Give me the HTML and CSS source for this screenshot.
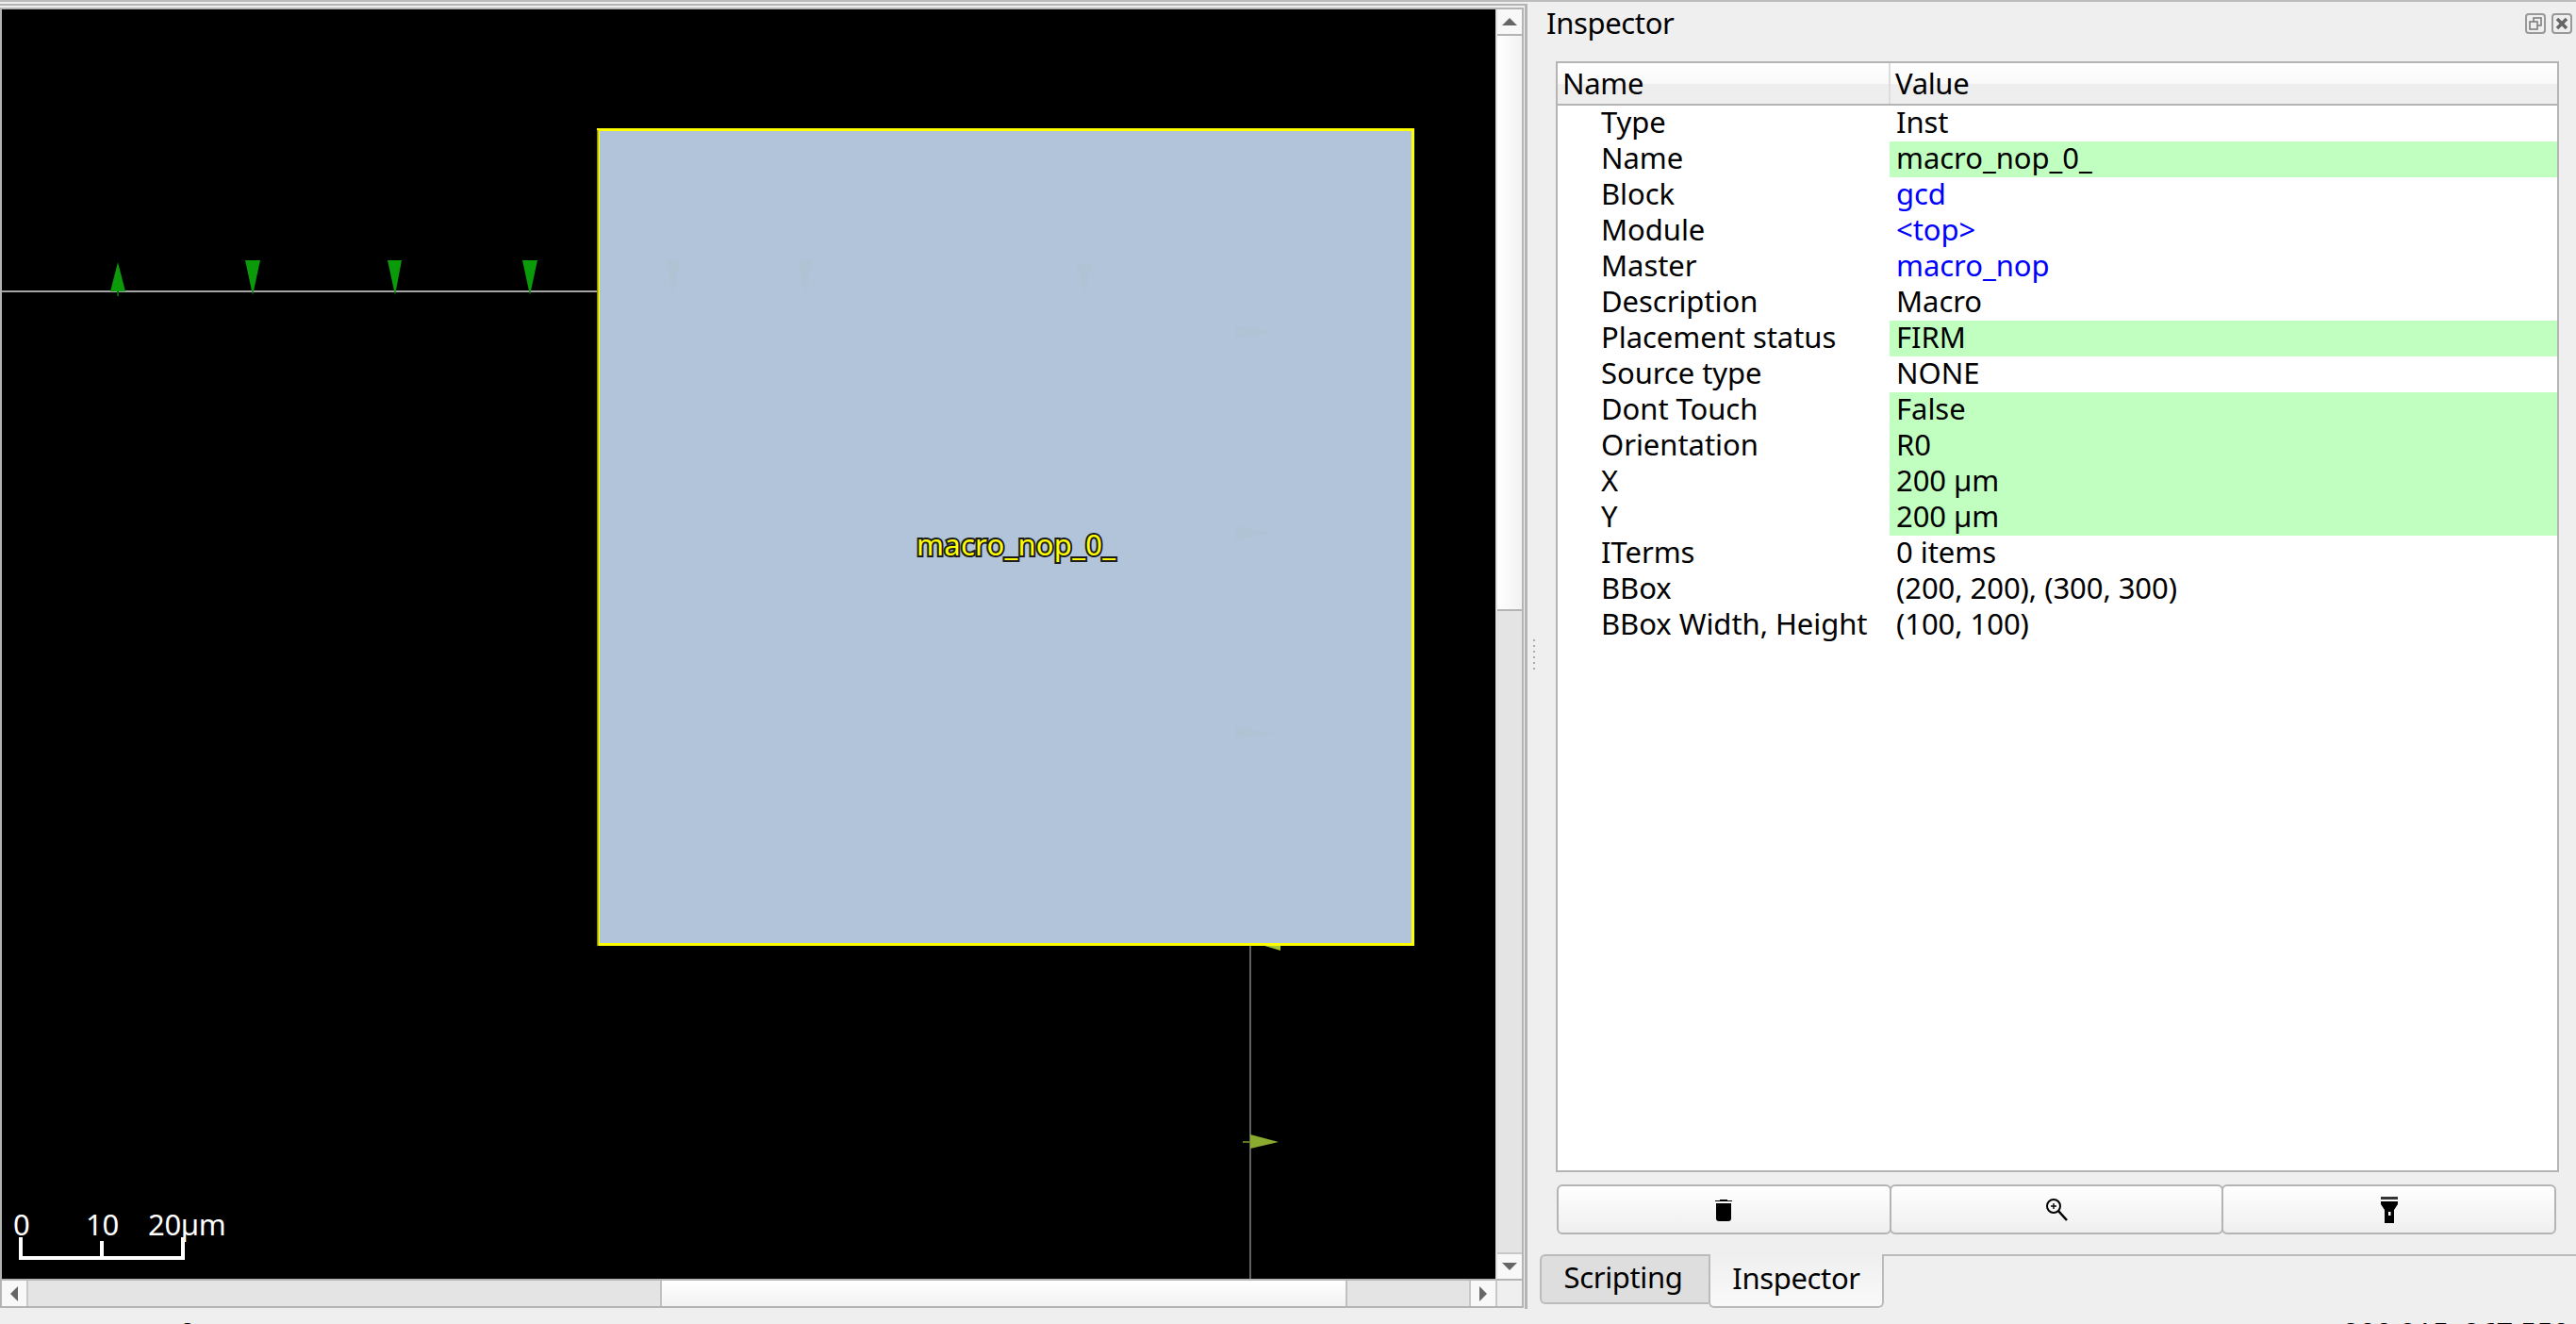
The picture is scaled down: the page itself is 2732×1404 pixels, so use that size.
FILE: index.html
```html
<!DOCTYPE html>
<html>
<head>
  <meta http-equiv="Content-Type" content="text/html; charset=utf-8" />
  <title>Inspector</title>
<link rel="stylesheet" href="styles.css">
</head>
<body>

<div class="topline"></div>

<div class="main">

  <div class="view-frame">
    <div class="view">
      <svg class="canvas" width="1584" height="1346" viewBox="2 10 1584 1346">
        <!-- nets -->
        <rect x="2" y="308" width="632" height="2" fill="#a5a5a5"/>
        <rect x="1325" y="1003" width="2" height="353" fill="#606060"/>
        <!-- pins -->
        <polygon points="125,278 133,309 117,309" fill="#0a9a0a"/>
        <rect x="124" y="309" width="2" height="5" fill="#075f07"/>
        <polygon points="260,276 276,276 268,313" fill="#0a9a0a"/>
        <polygon points="411,276 426,276 419,313" fill="#0a9a0a"/>
        <polygon points="554,276 570,276 562,313" fill="#0a9a0a"/>
        <polygon points="1326,1203 1356,1211 1326,1218" fill="#8aaa30"/>
        <rect x="1318" y="1210" width="8" height="2" fill="#5f7722"/>
        <polygon points="1338,1002 1358,1002 1358,1008" fill="#a4c82c"/>
        <!-- macro -->
        <rect x="634.5" y="137.5" width="864" height="864" fill="#b2c4da" stroke="#ffff00" stroke-width="3"/>
        <rect x="633" y="138" width="1.5" height="865" fill="#8a8a00"/>
        <g fill="#afc3d5">
          <polygon points="706,276 722,276 714,313"/>
          <polygon points="846,276 862,276 854,313"/>
          <polygon points="1142,280 1158,280 1150,313"/>
          <polygon points="1310,345 1350,352 1310,359"/>
          <polygon points="1310,558 1350,565 1310,572"/>
          <polygon points="1310,770 1350,777 1310,784"/>
        </g>
        <text class="macro-label" x="972" y="589">macro_nop_0_</text>
        <!-- scale -->
        <text class="scale-label" x="14" y="1310">0</text>
        <text class="scale-label" x="91" y="1310">10</text>
        <text class="scale-label" x="157" y="1310">20µm</text>
        <path d="M22 1312V1334H194V1312M108 1316V1334" fill="none" stroke="#fff" stroke-width="4"/>
      </svg>

      <div class="vbar">
        <div class="sb-btn sb-up"><span class="arrow-up"></span></div>
        <div class="vhandle"></div>
        <div class="trough"></div>
        <div class="sb-btn sb-down"><span class="arrow-down"></span></div>
      </div>

      <div class="hbar">
        <div class="sb-btn sb-left"><span class="arrow-left"></span></div>
        <div class="trough htrough-a"></div>
        <div class="hhandle"></div>
        <div class="trough"></div>
        <div class="sb-btn sb-right"><span class="arrow-right"></span></div>
      </div>
      <div class="corner"></div>
    </div>
  </div>

  <div class="splitter"><span class="dots"></span></div>

  <div class="side">
    <div class="dock-title">
      <span>Inspector</span>
      <span class="dock-btns">
        <svg width="22" height="22" viewBox="0 0 22 22">
          <rect x="1" y="1" width="20" height="20" rx="3" fill="none" stroke="#999" stroke-width="2"/>
          <rect x="9" y="5" width="8" height="8" fill="none" stroke="#777" stroke-width="1.5"/>
          <rect x="5" y="9" width="8" height="8" fill="#eee" stroke="#777" stroke-width="1.5"/>
        </svg>
        <svg width="22" height="22" viewBox="0 0 22 22">
          <rect x="1" y="1" width="20" height="20" rx="3" fill="none" stroke="#999" stroke-width="2"/>
          <path d="M6 6L16 16M16 6L6 16" stroke="#666" stroke-width="3.5"/>
        </svg>
      </span>
    </div>

    <div class="tree">
      <table class="props">
        <thead>
          <tr><th class="col-name">Name</th><th class="col-value">Value</th></tr>
        </thead>
        <tbody>
          <tr><td class="k">Type</td><td class="v">Inst</td></tr>
          <tr><td class="k">Name</td><td class="v edit">macro_nop_0_</td></tr>
          <tr><td class="k">Block</td><td class="v link">gcd</td></tr>
          <tr><td class="k">Module</td><td class="v link">&lt;top&gt;</td></tr>
          <tr><td class="k">Master</td><td class="v link">macro_nop</td></tr>
          <tr><td class="k">Description</td><td class="v">Macro</td></tr>
          <tr><td class="k">Placement status</td><td class="v edit">FIRM</td></tr>
          <tr><td class="k">Source type</td><td class="v">NONE</td></tr>
          <tr><td class="k">Dont Touch</td><td class="v edit">False</td></tr>
          <tr><td class="k">Orientation</td><td class="v edit">R0</td></tr>
          <tr><td class="k">X</td><td class="v edit">200 µm</td></tr>
          <tr><td class="k">Y</td><td class="v edit">200 µm</td></tr>
          <tr><td class="k">ITerms</td><td class="v">0 items</td></tr>
          <tr><td class="k">BBox</td><td class="v">(200, 200), (300, 300)</td></tr>
          <tr><td class="k">BBox Width, Height</td><td class="v">(100, 100)</td></tr>
        </tbody>
      </table>
    </div>

    <div class="actions">
      <button class="action">
        <svg width="18" height="24" viewBox="0 0 18 24">
          <path d="M5 2V1H13V2H18V3H0V2Z" fill="#000"/>
          <path d="M1 5H17V21Q17 24 14 24H4Q1 24 1 21Z" fill="#000"/>
        </svg>
      </button>
      <button class="action">
        <svg width="26" height="26" viewBox="0 0 26 26">
          <circle cx="10" cy="9" r="7" fill="none" stroke="#000" stroke-width="2"/>
          <path d="M10 6V12M7 9H13" stroke="#000" stroke-width="1.4"/>
          <path d="M15 14L24 24" stroke="#000" stroke-width="2.6"/>
        </svg>
      </button>
      <button class="action">
        <svg width="20" height="28" viewBox="0 0 20 28">
          <rect x="1" y="0" width="18" height="3" fill="#333"/>
          <path d="M1 5H19V8L15 14V28H5V14L1 8Z" fill="#000"/>
          <rect x="9" y="16" width="2.5" height="4" fill="#fff"/>
        </svg>
      </button>
    </div>

    <div class="tabs">
      <div class="tab">Scripting</div>
      <div class="tab tab-on">Inspector</div>
      <div class="tab-rest"></div>
    </div>
  </div>

</div>

<div class="status">
  <span class="status-left">0</span>
  <span class="status-right">200.915, 267.550</span>
</div>

</body>
</html>
```

FILE: styles.css
```css
html, body {
  margin: 0;
  padding: 0;
  width: 2732px;
  height: 1404px;
  overflow: hidden;
}
body {
  background-color: #efefef;
  color: #000;
  font-family: "Noto Sans", sans-serif;
  font-size: 31px;
  letter-spacing: -0.35px;
}

.topline {
  height: 2px;
  background-color: #bcbcbc;
}
.main {
  display: flex;
  height: 1386px;
}

/* layout view */
.view-frame {
  box-sizing: border-box;
  width: 1620px;
  margin-top: 2px;
  border-top: 2px solid #b4b4b4;
  border-right: 3px solid #b4b4b4;
  padding: 2px 1px 0 0;
}
.view {
  display: grid;
  grid-template-columns: 1584px 28px;
  grid-template-rows: 1346px 29px;
  border: 2px solid #b4b4b4;
  border-bottom-width: 2px;
}
.canvas {
  display: block;
  background-color: #000;
}
.macro-label {
  font-family: "Noto Sans", sans-serif;
  font-size: 31px;
  letter-spacing: 0.25px;
  fill: #ffff00;
  stroke: #1c1c1c;
  stroke-width: 4px;
  paint-order: stroke;
}
.scale-label {
  font-family: "Noto Sans", sans-serif;
  font-size: 31px;
  letter-spacing: -0.35px;
  fill: #fff;
}

/* scrollbars */
.vbar {
  display: flex;
  flex-direction: column;
  border-left: 2px solid #e0e0e0;
}
.hbar {
  display: flex;
  border-top: 2px solid #b4b4b4;
}
.corner {
  background-color: #efefef;
  border-top: 2px solid #b4b4b4;
  border-left: 2px solid #c8c8c8;
}
.sb-btn {
  display: flex;
  align-items: center;
  justify-content: center;
  background-color: #f8f8f8;
  flex: none;
}
.sb-up {
  height: 26px;
  border-bottom: 2px solid #b4b4b4;
}
.sb-down {
  height: 26px;
  border-top: 2px solid #c8c8c8;
}
.sb-left {
  width: 26px;
  border-right: 2px solid #c8c8c8;
}
.sb-right {
  width: 26px;
  border-left: 2px solid #c8c8c8;
}
.trough {
  flex: 1;
  background-color: #e4e4e4;
}
.htrough-a {
  flex: none;
  width: 670px;
}
.vhandle {
  height: 608px;
  flex: none;
  background: linear-gradient(to right, #fff, #f2f2f2);
  border-bottom: 2px solid #b4b4b4;
}
.hhandle {
  width: 725px;
  flex: none;
  background: linear-gradient(#fff, #f2f2f2);
  border-left: 2px solid #c0c0c0;
  border-right: 2px solid #c0c0c0;
}
.arrow-up, .arrow-down, .arrow-left, .arrow-right {
  width: 0;
  height: 0;
  border: 0 solid transparent;
}
.arrow-up {
  border-width: 0 8px 8px;
  border-bottom-color: #666;
}
.arrow-down {
  border-width: 8px 8px 0;
  border-top-color: #666;
}
.arrow-left {
  border-width: 8px 8px 8px 0;
  border-right-color: #666;
}
.arrow-right {
  border-width: 8px 0 8px 8px;
  border-left-color: #666;
}

.splitter {
  width: 13px;
  flex: none;
  display: flex;
  align-items: center;
  justify-content: center;
  padding-bottom: 14px;
  box-sizing: border-box;
}
.dots {
  width: 2px;
  height: 34px;
  margin-top: 14px;
  background: repeating-linear-gradient(#aaa 0, #aaa 2px, transparent 2px, transparent 6px);
}

/* dock */
.side {
  flex: 1;
  display: flex;
  flex-direction: column;
}
.dock-title {
  height: 63px;
  display: flex;
  justify-content: space-between;
  padding: 0 4px 0 7px;
  line-height: 44px;
}
.dock-btns {
  display: flex;
  gap: 6px;
  padding-top: 12px;
}
.tree {
  box-sizing: border-box;
  height: 1178px;
  margin: 0 18px 0 17px;
  border: 2px solid #b4b4b4;
  background-color: #fff;
}
.props {
  width: 100%;
  border-collapse: collapse;
  table-layout: fixed;
}
.props th {
  height: 38px;
  padding: 2px 0 3px 5px;
  line-height: 38px;
  font-weight: normal;
  text-align: left;
  background: linear-gradient(#fff, #f9f9f9 50%, #eee 52%, #eee);
  border-bottom: 2px solid #b4b4b4;
}
.col-name {
  width: 346px;
  border-right: 2px solid #ddd;
}
.props td {
  height: 34px;
  padding: 0 0 4px;
  line-height: 34px;
  letter-spacing: -0.05px;
  white-space: nowrap;
}
.k {
  padding-left: 46px !important;
}
.v {
  padding-left: 7px !important;
}
.edit {
  background-color: #c0ffc0;
}
.link {
  color: #0000ff;
}

.actions {
  display: flex;
  height: 53px;
  margin: 13px 22px 0 19px;
}
.action {
  flex: 1;
  display: flex;
  align-items: center;
  justify-content: center;
  margin: 0 -1px;
  padding: 0;
  border: 2px solid #b4b4b4;
  border-radius: 6px;
  background: linear-gradient(#fff, #efefef);
}

.tabs {
  display: flex;
  margin-top: 21px;
  height: 57px;
  align-items: flex-start;
}
.tab {
  box-sizing: border-box;
  width: 179px;
  height: 53px;
  border: 2px solid #bbb;
  border-right: 0;
  border-radius: 6px 0 0 6px;
  background-color: #dedede;
  text-align: center;
  line-height: 44px;
  padding-right: 4px;
}
.tab-on {
  width: 186px;
  height: 57px;
  border: 2px solid #bbb;
  border-top: 0;
  border-radius: 0 0 6px 6px;
  background: linear-gradient(#efefef, #f9f9f9);
  line-height: 50px;
  padding-right: 0;
}
.tab-rest {
  flex: 1;
  border-top: 2px solid #bbb;
}

.status {
  height: 16px;
  overflow: hidden;
  display: flex;
  justify-content: space-between;
  padding: 0 7px 0 190px;
  line-height: 38px;
}
.status-left, .status-right {
  margin-top: 6px;
}
```
